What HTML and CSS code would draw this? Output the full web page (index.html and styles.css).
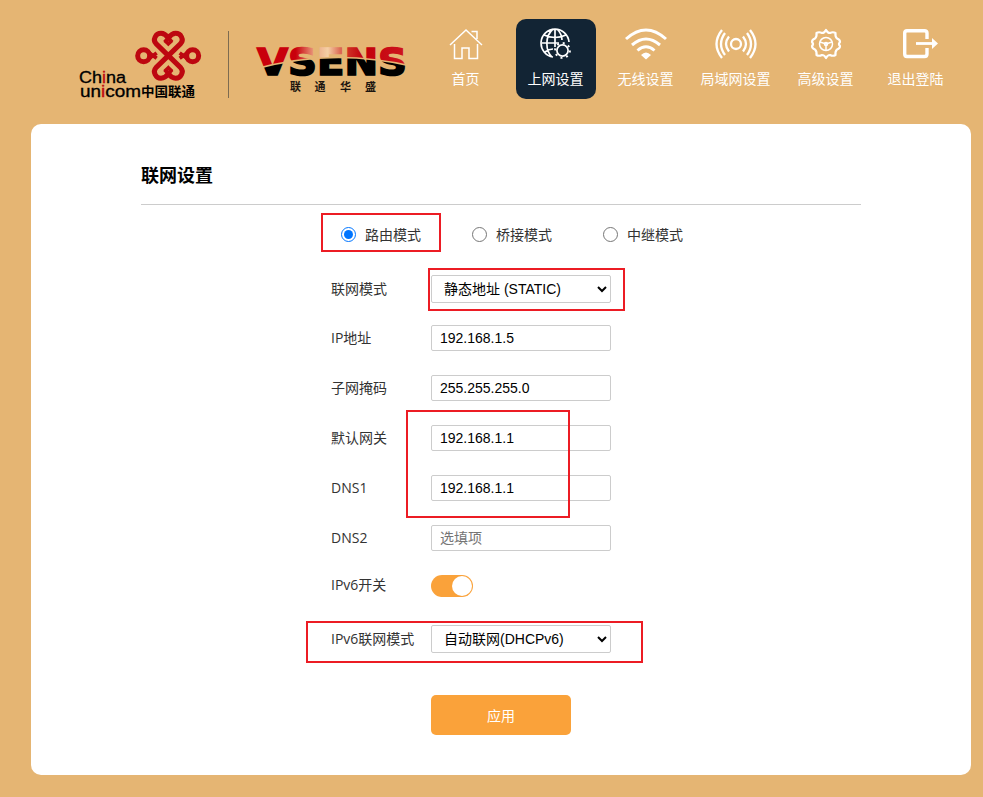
FILE: index.html
```html
<!DOCTYPE html>
<html lang="zh-CN">
<head>
<meta charset="utf-8">
<title>联网设置</title>
<link rel="stylesheet" href="styles.css">
</head>
<body>
<header class="header">
  <div class="brand">
    <svg class="unicom" width="150" height="80" viewBox="0 0 150 80">
      <g transform="translate(50 0) scale(.33333)" fill="none" stroke="#bd0710" stroke-width="15" stroke-linejoin="round">
        <path d="M145 107 L108 71 C97 59 107 40 123 40 C133 40 140 47 145 54 C150 47 157 40 167 40 C183 40 193 59 182 71 L108 143 C97 155 107 175 123 175 C133 175 140 168 145 161 C150 168 157 175 167 175 C183 175 193 155 182 143 Z"/>
        <circle cx="71" cy="107" r="18"/>
        <circle cx="218" cy="107" r="18"/>
        <path stroke-width="11" d="M145 54L156 66M145 54L134 66M134 61L149 75M156 61L141 75M145 161L156 149M145 161L134 149M134 154L149 140M156 154L141 140M88 99L110 115M88 115L110 99M201 99L179 115M201 115L179 99"/>
      </g>
      <g class="latin">
        <text x="9" y="63" textLength="47" lengthAdjust="spacingAndGlyphs">Ch<tspan fill="#bd0710">i</tspan>na</text>
        <text x="10" y="77" textLength="61" lengthAdjust="spacingAndGlyphs">un<tspan fill="#bd0710">i</tspan>com</text>
      </g>
      <text class="cn" x="71" y="76" textLength="54" lengthAdjust="spacingAndGlyphs">中国联通</text>
    </svg>
    <span class="divider"></span>
    <svg class="vsens" width="160" height="60" viewBox="0 0 160 60">
      <defs>
        <linearGradient id="red" x1="0" x2="1" y1="0" y2="0">
          <stop offset="0" stop-color="#c9000c"/><stop offset=".28" stop-color="#c9000c"/>
          <stop offset=".4" stop-color="#eba583"/><stop offset=".48" stop-color="#f5cfa5"/>
          <stop offset=".6" stop-color="#cf3227"/><stop offset=".7" stop-color="#c2000b"/><stop offset="1" stop-color="#cf1720"/>
        </linearGradient>
        <pattern id="split" width="160" height="60" patternUnits="userSpaceOnUse">
          <rect width="160" height="60" fill="url(#red)"/>
          <path fill="#000" d="M0 35Q80 12 160 31V60H0Z"/>
          <path fill="none" stroke="#e5b573" stroke-width="1.500" d="M0 35Q80 12 160 31"/>
        </pattern>
      </defs>
      <text class="word" x="6" y="39.500" textLength="150" lengthAdjust="spacingAndGlyphs">VSENS</text>
      <text class="sub" x="39 63.500 89 114" y="56">联通华盛</text>
    </svg>
  </div>
  <nav class="nav">
    <a class="item">
      <svg width="34" height="32" viewBox="0 0 34 32"><path stroke-width="1.500" d="M1 17L17 2L33 17M5.500 16V30.500H13V20H20V30.500H28.500V16M22.500 3.500H28V11"/></svg>
      <span>首页</span>
    </a>
    <a class="item active">
      <svg width="32" height="32" viewBox="0 0 32 32"><g stroke-width="1.700"><path d="M13 29A14 14 0 1 1 29 14M2 15H19M4 7Q15 12 26 7M5 24Q9 21 13 21M13 1C5 8 5 22 12 29M17 1Q22 6 22 12M15 1V19"/><circle cx="22.500" cy="22.500" r="5.600"/></g><circle cx="22.500" cy="22.500" r="7.400" stroke-width="2" stroke-dasharray="2 3.812"/></svg>
      <span>上网设置</span>
    </a>
    <a class="item">
      <svg width="42" height="32" viewBox="0 0 42 32"><path stroke-width="3" d="M1 11Q21 -7 41 11M7 17Q21 5 35 17M12.500 22.500Q21 15 29.500 22.500"/><path class="solid" d="M16 27Q21 22 26 27L21 31.500Z"/></svg>
      <span>无线设置</span>
    </a>
    <a class="item">
      <svg width="42" height="32" viewBox="0 0 42 32"><g stroke-width="2.300"><circle cx="21" cy="16" r="5"/><path d="M14 8.500Q8 16 14 23.500M10 5Q2 16 10 27M7 2Q-4 16 7 30M28 8.500Q34 16 28 23.500M32 5Q40 16 32 27M35 2Q46 16 35 30"/></g></svg>
      <span>局域网设置</span>
    </a>
    <a class="item">
      <svg width="32" height="32" viewBox="0 0 32 32"><path stroke-width="2.200" stroke-linejoin="round" d="M16 2Q17.500 5 20 5Q23 3.500 25.500 5Q25 8.500 27 10.500Q30 11.500 30 14Q28 16 30 18Q30 20.500 27 21.500Q25 23.500 25.500 27Q23 28.500 20 27Q17.500 27 16 30Q14.500 27 12 27Q9 28.500 6.500 27Q7 23.500 5 21.500Q2 20.500 2 18Q4 16 2 14Q2 11.500 5 10.500Q7 8.500 6.500 5Q9 3.500 12 5Q14.500 5 16 2Z"/><g stroke-width="1.500"><circle cx="16" cy="16" r="6.500"/><path d="M10 14L16 16L22 14M16 16V22"/><circle cx="16" cy="16" r="1.500"/></g></svg>
      <span>高级设置</span>
    </a>
    <a class="item">
      <svg class="exit" width="36" height="32" viewBox="0 0 36 32"><path stroke-width="3.400" d="M25 11V5Q25 2.700 22.500 2.700H5Q2.700 2.700 2.700 5V26Q2.700 28.500 5 28.500H22.500Q25 28.500 25 26V20"/><path stroke-width="2.800" d="M14 15.500H31"/><path class="solid" d="M30 10L36 15.500L30 21Z"/></svg>
      <span>退出登陆</span>
    </a>
  </nav>
</header>
<main class="panel">
  <h1>联网设置</h1>
  <form class="form">
    <div class="modes">
      <label><input type="radio" name="mode" checked>路由模式</label>
      <label><input type="radio" name="mode">桥接模式</label>
      <label><input type="radio" name="mode">中继模式</label>
    </div>
    <div class="row first"><label>联网模式</label><select><option>静态地址 (STATIC)</option></select></div>
    <div class="row"><label>IP地址</label><input type="text" value="192.168.1.5"></div>
    <div class="row"><label>子网掩码</label><input type="text" value="255.255.255.0"></div>
    <div class="row"><label>默认网关</label><input type="text" value="192.168.1.1"></div>
    <div class="row"><label>DNS1</label><input type="text" value="192.168.1.1"></div>
    <div class="row"><label>DNS2</label><input type="text" placeholder="选填项"></div>
    <div class="row toggle-row"><label>IPv6开关</label><span class="toggle"></span></div>
    <div class="row last"><label>IPv6联网模式</label><select><option>自动联网(DHCPv6)</option></select></div>
    <button type="button">应用</button>
  </form>
</main>
<div class="mark mark-route"></div>
<div class="mark mark-static"></div>
<div class="mark mark-gateway"></div>
<div class="mark mark-ipv6"></div>
</body>
</html>
```
FILE: styles.css
```css
* { box-sizing: border-box; }
body {
  margin: 0;
  height: 797px;
  position: relative;
  overflow: hidden;
  background: #e5b573;
  color: #333;
  font: 14px/20px "Open Sans", "Noto Sans CJK SC", sans-serif;
}
.header { display: flex; height: 124px; padding-left: 70px; }
.brand { display: flex; width: 356px; flex: none; }
.unicom { margin-top: 20px; }
.latin { font: 16px "Liberation Sans", sans-serif; stroke: #000; stroke-width: .3px; }
.latin tspan { stroke: #bd0710; }
.cn { font: bold 13px "Noto Sans CJK SC", sans-serif; }
.divider { width: 1px; height: 67px; margin: 31px 22px 0 8px; background: #7d6b50; }
.vsens { margin-top: 35px; flex: none; }
.word { font: bold 37px "DejaVu Sans", sans-serif; fill: url(#split); stroke: url(#split); stroke-width: 1.6px; }
.sub { font: bold 11px "Noto Sans CJK SC", sans-serif; fill: #1b1510; }
.nav { display: flex; gap: 10px; padding-top: 19px; }
.item {
  width: 80px;
  height: 80px;
  padding-top: 9px;
  border-radius: 10px;
  display: flex;
  flex-direction: column;
  align-items: center;
  color: #fff;
  white-space: nowrap;
}
.item svg { fill: none; stroke: #fff; margin-bottom: 9px; flex: none; }
.item span { margin-right: 1px; }
.item .solid { fill: #fff; stroke: none; }
.item .exit { margin-left: 8px; }
.active { background: #122434; }
.panel {
  width: 940px;
  height: 651px;
  margin-left: 31px;
  padding: 35px 110px 0;
  border-radius: 10px;
  background: #fff;
}
h1 {
  height: 46px;
  margin: 0;
  border-bottom: 1px solid #ccc;
  color: #000;
  font: bold 18px/30px "Noto Sans CJK SC", sans-serif;
}
.form { padding-left: 190px; }
.modes { display: flex; height: 59px; padding-left: 10px; }
.modes label { display: flex; align-items: center; width: 131px; }
.modes input { width: 15px; height: 15px; margin: 0 9px 0 0; }
.row { display: flex; align-items: center; height: 50px; }
.row > label { width: 100px; }
.row input, .row select {
  width: 180px;
  height: 26px;
  border: 1px solid #ccc;
  border-radius: 2px;
  background: #fff;
  color: #000;
  font: 14px "Liberation Sans", "Noto Sans CJK SC", sans-serif;
}
.row input { padding: 0 8px; }
.row select { height: 28px; padding-left: 8px; }
.first { height: 49px; padding-top: 1px; }
.toggle-row { height: 46px; }
.toggle-row > label { padding-bottom: 2px; }
.toggle {
  display: flex;
  justify-content: flex-end;
  width: 42px;
  height: 22px;
  padding: 1px;
  border-radius: 11px;
  background: #faa23a;
}
.toggle::after { content: ""; width: 20px; height: 20px; border-radius: 50%; background: #fff; }
.last { height: 60px; }
button {
  display: block;
  width: 140px;
  height: 40px;
  margin: 26px 0 0 100px;
  border: 0;
  border-radius: 5px;
  background: #faa23a;
  color: #fff;
  font: 14px "Noto Sans CJK SC", sans-serif;
}
.mark { position: absolute; border: 2px solid #ec1c24; }
.mark-route { left: 321px; top: 213px; width: 120px; height: 39px; }
.mark-static { left: 428px; top: 268px; width: 197px; height: 43px; }
.mark-gateway { left: 406px; top: 410px; width: 164px; height: 108px; }
.mark-ipv6 { left: 306px; top: 621px; width: 337px; height: 42px; }
```
